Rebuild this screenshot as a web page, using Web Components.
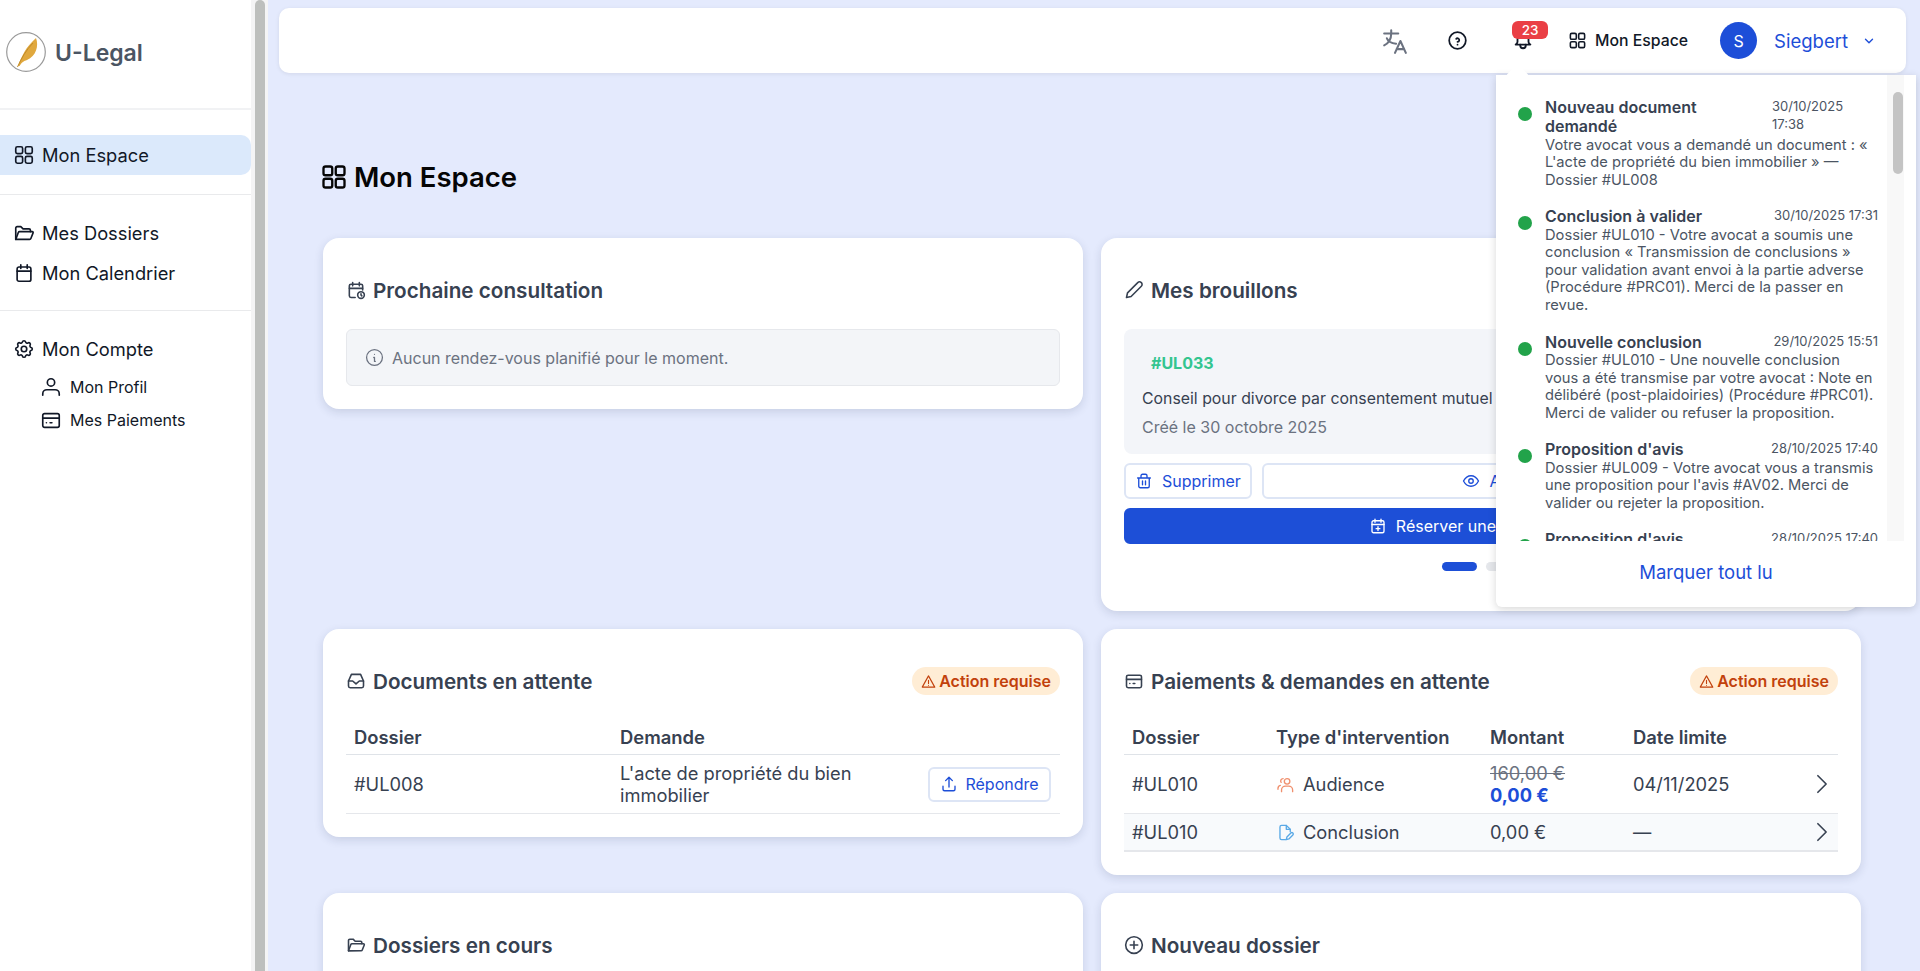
<!DOCTYPE html>
<html lang="fr">
<head>
<meta charset="utf-8">
<title>U-Legal</title>
<style>
  html, body { margin: 0; height: 100%; overflow: hidden; }
  body {
    display: flex;
    background: #e4eafd;
    font-family: Inter, "Liberation Sans", sans-serif;
    color: #374151;
  }
</style>
</head>
<body>
  <ul-sidebar>
    <ul-nav-item icon="grid" active>Mon Espace</ul-nav-item>
    <ul-nav-group style="margin-top:19px">
      <ul-nav-item icon="folder">Mes Dossiers</ul-nav-item>
      <ul-nav-item icon="calendar">Mon Calendrier</ul-nav-item>
    </ul-nav-group>
    <ul-nav-group style="margin-top:17px">
      <ul-nav-item icon="gear">Mon Compte</ul-nav-item>
      <ul-nav-item icon="user" sub>Mon Profil</ul-nav-item>
      <ul-nav-item icon="card" sub>Mes Paiements</ul-nav-item>
    </ul-nav-group>
  </ul-sidebar>
  <ul-scrolltrack></ul-scrolltrack>
  <ul-main>
    <ul-topbar></ul-topbar>
    <ul-notif-panel>
      <ul-notif heading="Nouveau document demandé" date="30/10/2025 17:38" narrow>Votre avocat vous a demandé un document : « L'acte de propriété du bien immobilier » — Dossier #UL008</ul-notif>
      <ul-notif heading="Conclusion à valider" date="30/10/2025 17:31">Dossier #UL010 - Votre avocat a soumis une conclusion « Transmission de conclusions » pour validation avant envoi à la partie adverse (Procédure #PRC01). Merci de la passer en revue.</ul-notif>
      <ul-notif heading="Nouvelle conclusion" date="29/10/2025 15:51">Dossier #UL010 - Une nouvelle conclusion vous a été transmise par votre avocat : Note en délibéré (post-plaidoiries) (Procédure #PRC01). Merci de valider ou refuser la proposition.</ul-notif>
      <ul-notif heading="Proposition d'avis" date="28/10/2025 17:40">Dossier #UL009 - Votre avocat vous a transmis une proposition pour l'avis #AV02. Merci de valider ou rejeter la proposition.</ul-notif>
      <ul-notif heading="Proposition d'avis" date="28/10/2025 17:40">Dossier #UL009 - Votre avocat vous a transmis une proposition pour l'avis #AV02.</ul-notif>
    </ul-notif-panel>
    <ul-page-title>Mon Espace</ul-page-title>
    <ul-grid>
      <ul-card icon="calendar-clock" heading="Prochaine consultation">
        <ul-alert>Aucun rendez-vous planifié pour le moment.</ul-alert>
      </ul-card>
      <ul-card icon="pencil" heading="Mes brouillons">
        <ul-draft></ul-draft>
      </ul-card>
      <ul-card icon="inbox" heading="Documents en attente" action>
        <ul-documents></ul-documents>
      </ul-card>
      <ul-card icon="card" heading="Paiements &amp; demandes en attente" action>
        <ul-payments></ul-payments>
      </ul-card>
      <ul-card icon="folder" heading="Dossiers en cours"></ul-card>
      <ul-card icon="plus-circle" heading="Nouveau dossier"></ul-card>
    </ul-grid>
  </ul-main>

<script>
const ICONS = {
  grid: '<rect x="3" y="3" width="7.500" height="7.500" rx="1.800"/><rect x="13.500" y="3" width="7.500" height="7.500" rx="1.800"/><rect x="3" y="13.500" width="7.500" height="7.500" rx="1.800"/><rect x="13.500" y="13.500" width="7.500" height="7.500" rx="1.800"/>',
  folder: '<path d="M3 19V6.500A1.500 1.500 0 0 1 4.500 5h4l2.500 2.500h6.500A1.500 1.500 0 0 1 19 9v1.500"/><path d="M3 19l2.800-7.500a1.500 1.500 0 0 1 1.400-1H21a1 1 0 0 1 .9 1.400L19.500 18a1.500 1.500 0 0 1-1.400 1z"/>',
  calendar: '<rect x="4.500" y="5.500" width="15" height="15.500" rx="2"/><path d="M8.500 3v4M15.500 3v4M4.500 10h15"/>',
  gear: '<path d="M10.300 4.300c.4-1.800 3-1.800 3.400 0a1.700 1.700 0 0 0 2.600 1.100c1.500-.9 3.300.8 2.400 2.400a1.700 1.700 0 0 0 1 2.500c1.800.4 1.800 3 0 3.400a1.700 1.700 0 0 0-1 2.600c.9 1.500-.9 3.300-2.400 2.400a1.700 1.700 0 0 0-2.600 1c-.4 1.800-3 1.800-3.400 0a1.700 1.700 0 0 0-2.600-1c-1.500.9-3.300-.9-2.400-2.400a1.700 1.700 0 0 0-1-2.600c-1.800-.4-1.800-3 0-3.400a1.700 1.700 0 0 0 1-2.500c-.9-1.600.9-3.300 2.400-2.400a1.700 1.700 0 0 0 2.600-1.100z"/><circle cx="12" cy="12" r="3"/>',
  user: '<circle cx="12" cy="7" r="4"/><path d="M3 21v-1.500A4.500 4.500 0 0 1 7.500 15h9a4.500 4.500 0 0 1 4.500 4.500V21"/>',
  card: '<rect x="3" y="5" width="18" height="15" rx="2"/><path d="M3 10h18M7 15h.01M11 15h2"/>',
  translate: '<path d="M2 5h13M8.500 2v3c0 5-2.500 9-6.500 11M4.500 9.500c1 2.500 4.500 4.500 8.500 5"/><path d="M12 23l5-11 5 11M20.500 19.500h-7"/>',
  help: '<circle cx="12" cy="12" r="9.500"/><path d="M12 16.800v.01M12 13.500a2 2 0 0 0 .9-3.800 2 2 0 0 0-2.400.5"/>',
  bell: '<path d="M10 5a2 2 0 1 1 4 0 7 7 0 0 1 4 6v3a4 4 0 0 0 2 3H4a4 4 0 0 0 2-3v-3a7 7 0 0 1 4-6"/><path d="M9 17v1a3 3 0 0 0 6 0v-1"/>',
  chevron: '<path d="M6 9l6 6 6-6"/>',
  'chevron-right': '<path d="M7.500 3l9 9-9 9"/>',
  'calendar-clock': '<path d="M11 21H6a2 2 0 0 1-2-2V7a2 2 0 0 1 2-2h12a2 2 0 0 1 2 2v5"/><path d="M8 3v4M16 3v4M4 10h16"/><circle cx="18" cy="18" r="4"/><path d="M18 16.500V18l1 1"/>',
  pencil: '<path d="M3 21l1.200-5.500L16.500 3.200a3 3 0 0 1 4.300 4.300L8.500 19.800z"/>',
  inbox: '<path d="M3 12l3.500-8h11L21 12v6a2 2 0 0 1-2 2H5a2 2 0 0 1-2-2z"/><path d="M3 12h5l4 3.500 4-3.500h5"/>',
  info: '<circle cx="12" cy="12" r="10"/><path d="M12 8v.01M11 12h1v5h1"/>',
  trash: '<path d="M5 8h14v11a2 2 0 0 1-2 2H7a2 2 0 0 1-2-2zM3.500 8h17M8 8V5a2 2 0 0 1 2-2h4a2 2 0 0 1 2 2v3M10 12v5M14 12v5"/>',
  eye: '<path d="M2 12c2.500-4.700 5.800-7 10-7s7.500 2.300 10 7c-2.500 4.700-5.800 7-10 7s-7.500-2.300-10-7z"/><circle cx="12" cy="12" r="3"/>',
  'calendar-plus': '<rect x="4" y="5" width="16" height="16" rx="2"/><path d="M8 3v4M16 3v4M4 10h16M12 13v5M9.500 15.500h5"/>',
  warning: '<path d="M12 3L2 21h20z"/><path d="M12 10v5M12 18v.01"/>',
  upload: '<path d="M4 15v4a2 2 0 0 0 2 2h12a2 2 0 0 0 2-2v-4"/><path d="M12 16V3M7.500 7.500L12 3l4.500 4.500"/>',
  people: '<circle cx="14" cy="8" r="3.500"/><path d="M7 21v-2a5 5 0 0 1 5-5h4a5 5 0 0 1 5 5v2"/><path d="M9 4.500a3 3 0 0 0-2.500 4.800M2.500 18v-1a4 4 0 0 1 3-3.800"/>',
  'file-pen': '<path d="M12 21H7a2 2 0 0 1-2-2V5a2 2 0 0 1 2-2h6l5 5v3"/><path d="M13 3v5h5"/><path d="M13 21l.8-3.400 5-5a1.700 1.700 0 0 1 2.500 2.500l-5 5z"/>',
  'plus-circle': '<circle cx="12" cy="12" r="10"/><path d="M12 7.500v9M7.500 12h9"/>'
};

function svgIcon(name, size, stroke) {
  return `<svg xmlns="http://www.w3.org/2000/svg" width="${size}" height="${size}" viewBox="0 0 24 24" fill="none" stroke="currentColor" stroke-width="${stroke || 2}" stroke-linecap="round" stroke-linejoin="round" style="display:block;flex:none">${ICONS[name]}</svg>`;
}

class UlSidebar extends HTMLElement {
  constructor() {
    super();
    this.attachShadow({ mode: 'open' });
    this.shadowRoot.innerHTML = `
      <style>
        :host {
          display: block;
          flex: none;
          width: 251px;
          height: 100%;
          background: #fff;
          color: #111827;
        }
        .brand {
          display: flex;
          align-items: center;
          gap: 9px;
          height: 110px;
          padding-left: 6px;
          box-sizing: border-box;
          border-bottom: 2px solid #f1f2f4;
          padding-bottom: 4px;
          color: #4b5563;
          font-size: 23px;
          font-weight: 600;
        }
        .brand span { margin-top: 2px; }
        nav { padding-top: 25px; }
      </style>
      <div class="brand">
        <svg width="40" height="40" viewBox="0 0 40 40">
          <circle cx="20" cy="20" r="19.300" fill="#fff" stroke="#9a9a9a" stroke-width="1.200"/>
          <path d="M12 34 C16 24 19 16 30 6 C33 14 30 24 21 28 C18 29 16 30 13.500 34z" fill="#e0a83e"/>
          <path d="M11.500 35 C15 27 20 18 27 11" fill="none" stroke="#c08a28" stroke-width="1"/>
        </svg>
        <span>U-Legal</span>
      </div>
      <nav><slot></slot></nav>
    `;
  }
}
customElements.define('ul-sidebar', UlSidebar);

class UlNavItem extends HTMLElement {
  constructor() {
    super();
    this.attachShadow({ mode: 'open' });
  }

  connectedCallback() {
    const sub = this.hasAttribute('sub');
    this.shadowRoot.innerHTML = `
      <style>
        :host {
          display: flex;
          align-items: center;
          gap: ${sub ? 8 : 7}px;
          height: ${sub ? 33 : 40}px;
          padding-left: ${sub ? 40 : 13}px;
          font-size: ${sub ? 16 : 18.3}px;
          color: #111827;
        }
        :host([sub]) { position: relative; top: 1px; }
        :host([active]) {
          background: #dbe9fb;
          border-radius: 0 10px 10px 0;
        }
      </style>
      ${svgIcon(this.getAttribute('icon'), 22, 1.8)}
      <span><slot></slot></span>
    `;
  }
}
customElements.define('ul-nav-item', UlNavItem);

class UlNavGroup extends HTMLElement {
  constructor() {
    super();
    this.attachShadow({ mode: 'open' });
    this.shadowRoot.innerHTML = `
      <style>
        :host {
          display: block;
          margin-top: 18px;
          padding-top: 18px;
          border-top: 1px solid #e9eaec;
        }
      </style>
      <slot></slot>
    `;
  }
}
customElements.define('ul-nav-group', UlNavGroup);

class UlScrolltrack extends HTMLElement {
  constructor() {
    super();
    this.attachShadow({ mode: 'open' });
    this.shadowRoot.innerHTML = `
      <style>
        :host {
          display: block;
          flex: none;
          width: 17px;
          height: 100%;
          background: #f4f4f5;
          box-sizing: border-box;
          padding: 0 3px 0 4px;
        }
        div { height: 100%; background: #bdbfbd; border-radius: 5px 5px 0 0; }
      </style>
      <div></div>
    `;
  }
}
customElements.define('ul-scrolltrack', UlScrolltrack);

class UlMain extends HTMLElement {
  constructor() {
    super();
    this.attachShadow({ mode: 'open' });
    this.shadowRoot.innerHTML = `
      <style>
        :host {
          display: block;
          flex: 1;
          min-width: 0;
          height: 100%;
          position: relative;
          overflow: hidden;
          padding: 8px 14px 0 11px;
          box-sizing: border-box;
        }
      </style>
      <slot></slot>
    `;
  }
}
customElements.define('ul-main', UlMain);

class UlTopbar extends HTMLElement {
  constructor() {
    super();
    this.attachShadow({ mode: 'open' });
    this.shadowRoot.innerHTML = `
      <style>
        :host {
          display: flex;
          align-items: center;
          justify-content: flex-end;
          height: 65px;
          background: #fff;
          border-radius: 10px;
          box-shadow: 0 1px 4px rgba(0,0,0,.08);
          padding-right: 30px;
          box-sizing: border-box;
          color: #111827;
        }
        .translate { color: #6b7280; margin-right: 39px; }
        .help { margin-right: 44px; }
        .bell { position: relative; width: 36px; height: 36px; margin-right: 20px; display: flex; align-items: flex-end; }
        .bell svg { margin-bottom: 8px; }
        .count {
          position: absolute;
          left: 0; top: -2px;
          width: 36px; height: 18px;
          background: #ea3f45;
          color: #fff;
          border-radius: 6px;
          font-size: 13.500px;
          font-weight: 500;
          line-height: 18px;
          text-align: center;
        }
        .space { display: flex; align-items: center; gap: 8px; font-size: 15.800px; font-weight: 500; margin-right: 32px; }
        .avatar {
          width: 37px; height: 37px; border-radius: 50%;
          background: #1d4ed8; color: #fff;
          display: flex; align-items: center; justify-content: center;
          font-size: 16px; margin-right: 17px;
        }
        .name { color: #1d4ed8; font-size: 18.500px; margin-right: 14px; }
        .caret { color: #1d4ed8; }
      </style>
      <div class="translate">${svgIcon('translate', 26, 1.9)}</div>
      <div class="help">${svgIcon('help', 21, 2)}</div>
      <div class="bell">${svgIcon('bell', 22, 2)}<span class="count">23</span></div>
      <div class="space">${svgIcon('grid', 19, 2)}<span>Mon Espace</span></div>
      <div class="avatar">S</div>
      <span class="name">Siegbert</span>
      <div class="caret">${svgIcon('chevron', 14, 2.4)}</div>
    `;
  }
}
customElements.define('ul-topbar', UlTopbar);

class UlNotifPanel extends HTMLElement {
  constructor() {
    super();
    this.attachShadow({ mode: 'open' });
    this.shadowRoot.innerHTML = `
      <style>
        :host {
          position: absolute;
          z-index: 10;
          right: 4px;
          top: 75px;
          width: 420px;
          height: 532px;
          background: #fff;
          border-radius: 0 0 6px 6px;
          box-shadow: 0 2px 8px rgba(0,0,0,.16);
          display: flex;
          flex-direction: column;
        }
        .caret {
          position: absolute;
          left: 14px; top: -8px;
          width: 15px; height: 15px;
          background: #fff;
          transform: rotate(45deg);
        }
        .body { position: relative; flex: 1; min-height: 0; overflow: hidden; display: flex; }
        .list { flex: 1; min-width: 0; padding: 23px 9px 0 22px; overflow: hidden; display: flex; flex-direction: column; gap: 18px; }
        .track { flex: none; width: 17px; margin-right: 12px; background: #f8f8f8; padding: 17px 1px 0 6px; box-sizing: border-box; }
        .thumb { height: 82px; background: #c4c4c4; border-radius: 5px; }
        .foot {
          flex: none;
          height: 66px;
          box-sizing: border-box;
          padding-bottom: 4px;
          display: flex;
          align-items: center;
          justify-content: center;
          color: #1d4ed8;
          font-size: 18.500px;
        }
      </style>
      <span class="caret"></span>
      <div class="body">
        <div class="list"><slot></slot></div>
        <div class="track"><div class="thumb"></div></div>
      </div>
      <div class="foot">Marquer tout lu</div>
    `;
  }
}
customElements.define('ul-notif-panel', UlNotifPanel);

class UlNotif extends HTMLElement {
  constructor() {
    super();
    this.attachShadow({ mode: 'open' });
  }

  connectedCallback() {
    const narrow = this.hasAttribute('narrow');
    this.shadowRoot.innerHTML = `
      <style>
        :host {
          display: grid;
          grid-template-columns: 14px 1fr;
          column-gap: 13px;
          flex: none;
        }
        .dot { width: 14px; height: 14px; border-radius: 50%; background: #22a34a; margin-top: 9px; }
        .head { display: flex; justify-content: space-between; gap: 16px; }
        .title { font-size: 16px; font-weight: 600; line-height: 19.300px; color: #374151; }
        .date { flex: none; width: ${narrow ? '84px' : 'auto'}; font-size: 13px; line-height: 17.500px; color: #4b5563; margin-right: ${narrow ? '22px' : '0'}; }
        .text { font-size: 14.700px; line-height: 17.600px; color: #4b5563; padding-right: 2px; }
      </style>
      <div class="dot"></div>
      <div>
        <div class="head">
          <span class="title">${this.getAttribute('heading')}</span>
          <span class="date">${this.getAttribute('date')}</span>
        </div>
        <div class="text"><slot></slot></div>
      </div>
    `;
  }
}
customElements.define('ul-notif', UlNotif);

class UlPageTitle extends HTMLElement {
  constructor() {
    super();
    this.attachShadow({ mode: 'open' });
    this.shadowRoot.innerHTML = `
      <style>
        :host {
          display: flex;
          align-items: center;
          gap: 6px;
          margin: 85px 0 42px 41px;
          height: 38px;
          font-size: 27.500px;
          font-weight: 600;
          color: #050505;
        }
      </style>
      ${svgIcon('grid', 28, 2)}
      <span><slot></slot></span>
    `;
  }
}
customElements.define('ul-page-title', UlPageTitle);

class UlGrid extends HTMLElement {
  constructor() {
    super();
    this.attachShadow({ mode: 'open' });
    this.shadowRoot.innerHTML = `
      <style>
        :host {
          display: grid;
          grid-template-columns: 760px 760px;
          column-gap: 18px;
          row-gap: 18px;
          align-items: start;
          margin-left: 44px;
        }
      </style>
      <slot></slot>
    `;
  }
}
customElements.define('ul-grid', UlGrid);

class UlCard extends HTMLElement {
  constructor() {
    super();
    this.attachShadow({ mode: 'open' });
  }

  connectedCallback() {
    const badge = this.hasAttribute('action')
      ? `<span class="badge">${svgIcon('warning', 15, 1.8)}Action requise</span>`
      : '';
    this.shadowRoot.innerHTML = `
      <style>
        :host {
          display: block;
          background: #fff;
          border-radius: 16px;
          box-shadow: 0 3px 10px rgba(30,41,80,.14);
          padding: 38px 23px 23px;
          box-sizing: border-box;
        }
        header {
          display: flex;
          align-items: center;
          gap: 7px;
          height: 28px;
          margin-bottom: 24px;
          font-size: 20.700px;
          font-weight: 600;
          color: #374151;
        }
        .ic { color: #374151; }
        .badge {
          margin-left: auto;
          display: flex;
          align-items: center;
          gap: 3px;
          height: 28px;
          padding: 0 9px;
          border-radius: 14px;
          background: #ffedd5;
          color: #c2410c;
          font-size: 16px;
          font-weight: 600;
        }
      </style>
      <header>
        <span class="ic">${svgIcon(this.getAttribute('icon'), 20, 1.9)}</span>
        <span>${this.getAttribute('heading')}</span>
        ${badge}
      </header>
      <slot></slot>
    `;
  }
}
customElements.define('ul-card', UlCard);

class UlAlert extends HTMLElement {
  constructor() {
    super();
    this.attachShadow({ mode: 'open' });
    this.shadowRoot.innerHTML = `
      <style>
        :host {
          display: flex;
          align-items: center;
          gap: 8px;
          height: 57px;
          margin-top: 25px;
          box-sizing: border-box;
          padding-left: 18px;
          background: #f3f5f8;
          border: 1px solid #e6e8ec;
          border-radius: 6px;
          color: #6b7280;
          font-size: 16px;
        }
      </style>
      ${svgIcon('info', 19, 1.6)}
      <span><slot></slot></span>
    `;
  }
}
customElements.define('ul-alert', UlAlert);

class UlButton extends HTMLElement {
  constructor() {
    super();
    this.attachShadow({ mode: 'open' });
  }

  connectedCallback() {
    this.shadowRoot.innerHTML = `
      <style>
        :host {
          display: flex;
          align-items: center;
          justify-content: center;
          gap: 9px;
          height: 36px;
          box-sizing: border-box;
          padding: 0 9px;
          border: 2px solid #dde5f5;
          border-radius: 6px;
          background: #fff;
          color: #1d4ed8;
          font-size: 16px;
        }
        :host([primary]) {
          background: #1d4fd7;
          border-color: #1d4fd7;
          color: #fff;
        }
      </style>
      ${svgIcon(this.getAttribute('icon'), 18, 1.8)}
      <span><slot></slot></span>
    `;
  }
}
customElements.define('ul-button', UlButton);

class UlDraft extends HTMLElement {
  constructor() {
    super();
    this.attachShadow({ mode: 'open' });
    this.shadowRoot.innerHTML = `
      <style>
        :host { display: block; margin-top: 25px; }
        .box {
          height: 125px;
          box-sizing: border-box;
          background: #f3f5f9;
          border-radius: 8px;
          padding: 24px 18px 0;
          color: #374151;
        }
        .ref { color: #34c590; font-size: 16px; font-weight: 700; line-height: 20px; padding-left: 9px; width: fit-content; }
        .what { font-size: 15.850px; line-height: 20px; margin-top: 16px; width: fit-content; }
        .when { font-size: 16px; line-height: 20px; margin-top: 8px; color: #6b7280; width: fit-content; }
        .row { display: flex; gap: 10px; margin-top: 9px; }
        .row ul-button:last-child { flex: 1; }
        ul-button[primary] { margin-top: 9px; }
        .dots { display: flex; justify-content: center; gap: 9px; margin: 18px 0 17px; }
        .dots i { width: 35px; height: 9px; border-radius: 5px; background: #e5e7eb; }
        .dots i:first-child { background: #1d4fd7; }
      </style>
      <div class="box">
        <div class="ref">#UL033</div>
        <div class="what">Conseil pour divorce par consentement mutuel</div>
        <div class="when">Créé le 30 octobre 2025</div>
      </div>
      <div class="row">
        <ul-button icon="trash">Supprimer</ul-button>
        <ul-button icon="eye">Aperçu du brouillon</ul-button>
      </div>
      <ul-button icon="calendar-plus" primary>Réserver une consultation</ul-button>
      <div class="dots"><i></i><i></i></div>
    `;
  }
}
customElements.define('ul-draft', UlDraft);

const TABLE_CSS = `
  :host { display: block; }
  table { width: 100%; border-collapse: collapse; table-layout: fixed; font-size: 18.300px; color: #374151; }
  th { text-align: left; font-weight: 600; height: 35px; padding: 0 8px; border-bottom: 1px solid #dfe3e8; vertical-align: middle; line-height: 22px; font-size: 18.400px; }
  td { padding: 0 8px; height: 58px; border-bottom: 1px solid #e5e7eb; line-height: 22px; }
`;

class UlDocuments extends HTMLElement {
  constructor() {
    super();
    this.attachShadow({ mode: 'open' });
    this.shadowRoot.innerHTML = `
      <style>${TABLE_CSS}
        ul-button { height: 35px; gap: 7px; width: 123px; }
        td:last-child { padding: 0 9px 0 0; }
      </style>
      <table>
        <colgroup><col style="width:266px"><col><col style="width:132px"></colgroup>
        <tr><th>Dossier</th><th>Demande</th><th></th></tr>
        <tr>
          <td>#UL008</td>
          <td>L'acte de propriété du bien immobilier</td>
          <td><ul-button icon="upload">Répondre</ul-button></td>
        </tr>
      </table>
    `;
  }
}
customElements.define('ul-documents', UlDocuments);

class UlPayments extends HTMLElement {
  constructor() {
    super();
    this.attachShadow({ mode: 'open' });
    this.shadowRoot.innerHTML = `
      <style>${TABLE_CSS}
        .type { display: flex; align-items: center; gap: 8px; }
        .orange { color: #f0906e; }
        .sky { color: #5aa9e6; }
        .old { color: #6b7280; text-decoration: line-through; }
        .new { color: #1d4ed8; font-weight: 700; }
        .last { padding: 0 5px 0 0; color: #374151; }
        .last svg { margin-left: auto; }
        tr.alt td { height: 36px; background: #f8fafc; border-bottom-width: 2px; }
      </style>
      <table>
        <colgroup><col style="width:144px"><col style="width:214px"><col style="width:143px"><col><col style="width:46px"></colgroup>
        <tr><th>Dossier</th><th>Type d'intervention</th><th>Montant</th><th>Date limite</th><th></th></tr>
        <tr>
          <td>#UL010</td>
          <td><div class="type"><span class="orange">${svgIcon('people', 19, 1.7)}</span>Audience</div></td>
          <td><div class="old">160,00 €</div><div class="new">0,00 €</div></td>
          <td>04/11/2025</td>
          <td class="last">${svgIcon('chevron-right', 22, 1.8)}</td>
        </tr>
        <tr class="alt">
          <td>#UL010</td>
          <td><div class="type"><span class="sky">${svgIcon('file-pen', 19, 1.7)}</span>Conclusion</div></td>
          <td>0,00 €</td>
          <td>—</td>
          <td class="last">${svgIcon('chevron-right', 22, 1.8)}</td>
        </tr>
      </table>
    `;
  }
}
customElements.define('ul-payments', UlPayments);
</script>
</body>
</html>
